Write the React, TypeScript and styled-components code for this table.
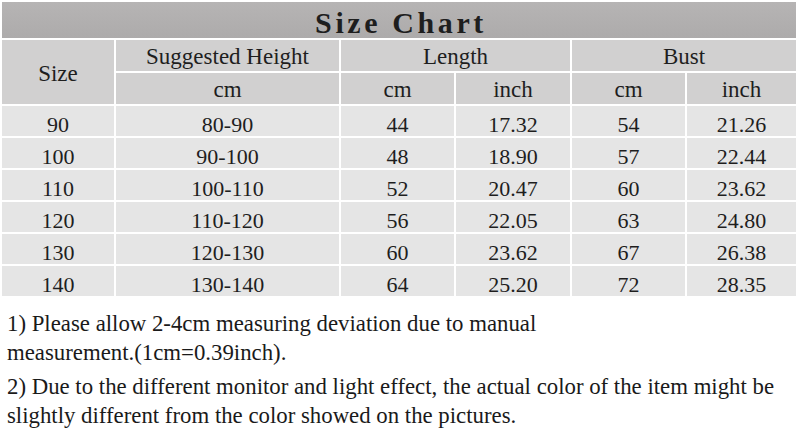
import React from "react";
import styled, { createGlobalStyle } from "styled-components";

const Global = createGlobalStyle`
  html, body { margin: 0; padding: 0; background: #ffffff; }
`;

const serif = `"Liberation Serif", "Times New Roman", Tinos, serif`;

const Page = styled.div`
  width: 800px;
  height: 435px;
  padding: 2px 4px 0 2px;
  box-sizing: border-box;
  overflow: hidden;
  font-family: ${serif};
  color: #1c1c1c;
`;

const Table = styled.div`
  display: grid;
  grid-template-columns: 112px 223px 113px 114px 113px 109px;
  grid-template-rows: 36px 31px 31px repeat(6, 30px);
  gap: 2px;
  background: #ffffff;
`;

const Title = styled.div`
  grid-column: 1 / -1;
  background: linear-gradient(180deg, #b6b4b4 0%, #adabab 100%);
  box-sizing: border-box;
  padding-top: 8px;
  padding-left: 4px;
  line-height: 26px;
  text-align: center;
  font-family: ${serif};
  font-weight: bold;
  font-size: 30px;
  letter-spacing: 3.6px;
  color: #1e1e1e;
`;

const HeadCell = styled.div<{ $span?: number; $rows?: number }>`
  grid-column: span ${(p) => p.$span ?? 1};
  grid-row: span ${(p) => p.$rows ?? 1};
  background: #d1d0d0;
  box-sizing: border-box;
  display: flex;
  justify-content: center;
  align-items: ${(p) => ((p.$rows ?? 1) > 1 ? "center" : "flex-start")};
  padding-top: 4px;
  line-height: 26px;
  font-family: ${serif};
  font-size: 23px;
  color: #1e1e1e;
`;

const Cell = styled.div`
  background: #e5e5e5;
  box-sizing: border-box;
  padding-top: 7px;
  line-height: 23px;
  text-align: center;
  font-family: ${serif};
  font-size: 22px;
  color: #1e1e1e;
`;

const Notes = styled.div`
  margin-top: 13px;
  padding-left: 5px;
  font-family: ${serif};
  font-size: 22.8px;
  color: #1a1a1a;
  display: flex;
  flex-direction: column;
  gap: 5px;
`;

const Note = styled.p`
  margin: 0;
  line-height: 29px;
  white-space: nowrap;
`;

const rows = [
  ["90", "80-90", "44", "17.32", "54", "21.26"],
  ["100", "90-100", "48", "18.90", "57", "22.44"],
  ["110", "100-110", "52", "20.47", "60", "23.62"],
  ["120", "110-120", "56", "22.05", "63", "24.80"],
  ["130", "120-130", "60", "23.62", "67", "26.38"],
  ["140", "130-140", "64", "25.20", "72", "28.35"],
];

export default function App() {
  return (
    <Page>
      <Global />
      <Table>
        <Title>Size Chart</Title>
        <HeadCell $rows={2}>Size</HeadCell>
        <HeadCell>Suggested Height</HeadCell>
        <HeadCell $span={2}>Length</HeadCell>
        <HeadCell $span={2}>Bust</HeadCell>
        <HeadCell>cm</HeadCell>
        <HeadCell>cm</HeadCell>
        <HeadCell>inch</HeadCell>
        <HeadCell>cm</HeadCell>
        <HeadCell>inch</HeadCell>
        {rows.map((r) =>
          r.map((v, i) => <Cell key={r[0] + "-" + i}>{v}</Cell>)
        )}
      </Table>
      <Notes>
        <Note>
          1) Please allow 2-4cm measuring deviation due to manual
          <br />
          measurement.(1cm=0.39inch).
        </Note>
        <Note>
          2) Due to the different monitor and light effect, the actual color of the item might be
          <br />
          slightly different from the color showed on the pictures.
        </Note>
      </Notes>
    </Page>
  );
}
